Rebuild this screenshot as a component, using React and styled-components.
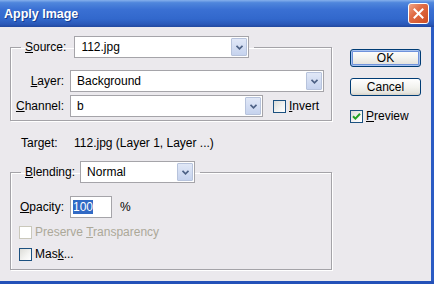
import React from 'react';
import styled, { createGlobalStyle } from 'styled-components';

const GlobalStyle = createGlobalStyle`
  html, body {
    margin: 0;
    padding: 0;
  }
  body {
    width: 434px;
    height: 284px;
    overflow: hidden;
    background: #ebe9ed;
    font-family: "Liberation Sans", Arial, sans-serif;
    font-size: 12px;
    color: #000;
  }
`;

const Window = styled.div`
  width: 434px;
  height: 284px;
  box-sizing: border-box;
  display: flex;
  flex-direction: column;
  background: #ebe9ed;
  border-bottom: 3px solid #2451b8;
`;

const TitleBar = styled.div`
  height: 27px;
  flex: none;
  display: flex;
  align-items: center;
  justify-content: space-between;
  padding: 0 5px 0 4px;
  background: linear-gradient(
    to bottom,
    #86b0ec 0%,
    #4f86dc 10%,
    #3a70d3 35%,
    #3268cc 70%,
    #2a58b8 90%,
    #21479e 100%
  );
`;

const Title = styled.span`
  font-size: 12.5px;
  font-weight: bold;
  color: #fff;
  text-shadow: 1px 1px 0 #163d8f;
`;

const CloseButton = styled.div`
  width: 19px;
  height: 19px;
  border: 1px solid #fff;
  border-radius: 3px;
  display: flex;
  align-items: center;
  justify-content: center;
  background: linear-gradient(135deg, #f0a487 0%, #e06c45 40%, #cf4d22 100%);
`;

const Body = styled.div`
  flex: 1;
  display: flex;
  padding-left: 10px;
  border-right: 3px solid #2a5bc4;
`;

const LeftCol = styled.div`
  width: 322px;
  display: flex;
  flex-direction: column;
`;

const RightCol = styled.div`
  margin-left: 18px;
  padding-top: 22px;
  display: flex;
  flex-direction: column;
`;

const Group = styled.fieldset`
  margin: ${(p) => p.$top}px 0 0 0;
  padding: 0 0 ${(p) => p.$bottom}px 0;
  border: 1px solid #a4a3a8;
  box-shadow: 1px 1px 0 #fff, inset 1px 1px 0 #fff;
  min-width: 0;
`;

const Legend = styled.legend`
  margin-left: 10px;
  padding: 0 5px 0 4px;
  display: flex;
  align-items: center;
  gap: ${(p) => p.$gap}px;
`;

const Row = styled.div`
  display: flex;
  align-items: center;
  margin-top: ${(p) => p.$top || 0}px;
  padding-left: ${(p) => p.$indent || 0}px;
`;

const Label = styled.span`
  width: ${(p) => (p.$width ? `${p.$width}px` : 'auto')};
  text-align: ${(p) => (p.$right ? 'right' : 'left')};
  margin-right: ${(p) => p.$gap || 0}px;
  margin-left: ${(p) => p.$left || 0}px;
  white-space: nowrap;
`;

const SelectBox = styled.div`
  width: ${(p) => p.$width}px;
  height: 22px;
  box-sizing: border-box;
  border: 1px solid #a5a4a9;
  background: #fff;
  display: flex;
  align-items: center;
  padding: 1px;
`;

const SelectText = styled.span`
  flex: 1;
  padding-left: 5px;
`;

const ArrowButton = styled.div`
  width: 16px;
  height: 18px;
  box-sizing: border-box;
  border: 1px solid #b7c3dc;
  border-radius: 1px;
  background: linear-gradient(to bottom, #e1e8f7, #c6d3ee);
  display: flex;
  align-items: center;
  justify-content: center;
`;

const TextInput = styled.div`
  width: 42px;
  height: 22px;
  box-sizing: border-box;
  border: 1px solid #a5a4a9;
  background: #fff;
  display: flex;
  align-items: center;
  padding-left: 2px;
`;

const Selected = styled.span`
  background: #316ac5;
  color: #fff;
  line-height: 14px;
`;

const CheckRow = styled.label`
  display: flex;
  align-items: center;
  margin-top: ${(p) => p.$top || 0}px;
  margin-left: ${(p) => p.$left || 0}px;
  color: ${(p) => (p.$disabled ? '#aca899' : '#000')};
`;

const Box = styled.span`
  width: 13px;
  height: 13px;
  box-sizing: border-box;
  margin-right: 3px;
  border: 1px solid ${(p) => (p.$disabled ? '#cac8bb' : '#1c5180')};
  background: ${(p) =>
    p.$disabled ? '#fff' : 'linear-gradient(135deg, #dcdcd7 0%, #f4f4f2 60%, #fff 100%)'};
  display: flex;
  align-items: center;
  justify-content: center;
`;

const Button = styled.div`
  width: 71px;
  height: 18px;
  box-sizing: border-box;
  margin-top: ${(p) => p.$top || 0}px;
  border: 1px solid #003c74;
  border-radius: 3px;
  background: linear-gradient(to bottom, #ffffff 0%, #f3f3ef 50%, #e6e5df 85%, #d7d2c7 100%);
  box-shadow: ${(p) =>
    p.$default ? 'inset 0 0 0 1px #a8c3f0, inset 0 0 0 2px #6f93db' : 'none'};
  display: flex;
  align-items: center;
  justify-content: center;
`;

const TargetRow = styled.div`
  display: flex;
  margin-top: 15px;
  padding-left: 11px;
  height: 14px;
  align-items: center;
`;

const Chevron = () => (
  <svg width="7" height="5" viewBox="0 0 7 5">
    <path d="M0.5 0.8 L3.5 3.8 L6.5 0.8" fill="none" stroke="#4d6185" strokeWidth="1.7" />
  </svg>
);

const Select = ({ width, value }) => (
  <SelectBox $width={width}>
    <SelectText>{value}</SelectText>
    <ArrowButton>
      <Chevron />
    </ArrowButton>
  </SelectBox>
);

const Check = ({ checked, disabled }) => (
  <Box $disabled={disabled}>
    {checked && (
      <svg width="9" height="9" viewBox="0 0 9 9">
        <path d="M1 4.2 L3.4 6.6 L8 1.8" fill="none" stroke="#21a121" strokeWidth="2" />
      </svg>
    )}
  </Box>
);

export default function App() {
  return (
    <>
      <GlobalStyle />
      <Window>
        <TitleBar>
          <Title>Apply Image</Title>
          <CloseButton>
            <svg width="11" height="11" viewBox="0 0 11 11">
              <path d="M1.5 1.5 L9.5 9.5 M9.5 1.5 L1.5 9.5" stroke="#fff" strokeWidth="2" strokeLinecap="square" />
            </svg>
          </CloseButton>
        </TitleBar>
        <Body>
          <LeftCol>
            <Group $top={9} $bottom={3}>
              <Legend $gap={8}>
                <Label>
                  <u>S</u>ource:
                </Label>
                <Select width={175} value="112.jpg" />
              </Legend>
              <Row $top={12}>
                <Label $width={53} $right $gap={6}>
                  <u>L</u>ayer:
                </Label>
                <Select width={254} value="Background" />
              </Row>
              <Row $top={3}>
                <Label $width={53} $right $gap={6}>
                  <u>C</u>hannel:
                </Label>
                <Select width={193} value="b" />
                <CheckRow $left={10}>
                  <Check />
                  <span>
                    <u>I</u>nvert
                  </span>
                </CheckRow>
              </Row>
            </Group>

            <TargetRow>
              <Label $width={53}>Target:</Label>
              <span>112.jpg (Layer 1, Layer ...)</span>
            </TargetRow>

            <Group $top={11} $bottom={8}>
              <Legend $gap={5}>
                <Label>
                  <u>B</u>lending:
                </Label>
                <Select width={115} value="Normal" />
              </Legend>
              <Row $top={13} $indent={9}>
                <Label $width={50}>
                  <u>O</u>pacity:
                </Label>
                <TextInput>
                  <Selected>100</Selected>
                </TextInput>
                <Label $left={8}>%</Label>
              </Row>
              <CheckRow $top={7} $left={8} $disabled>
                <Check disabled />
                <span>
                  Preserve <u>T</u>ransparency
                </span>
              </CheckRow>
              <CheckRow $top={8} $left={8}>
                <Check />
                <span>
                  Mas<u>k</u>...
                </span>
              </CheckRow>
            </Group>
          </LeftCol>

          <RightCol>
            <Button $default>OK</Button>
            <Button $top={11}>Cancel</Button>
            <CheckRow $top={13}>
              <Check checked />
              <span>
                <u>P</u>review
              </span>
            </CheckRow>
          </RightCol>
        </Body>
      </Window>
    </>
  );
}
